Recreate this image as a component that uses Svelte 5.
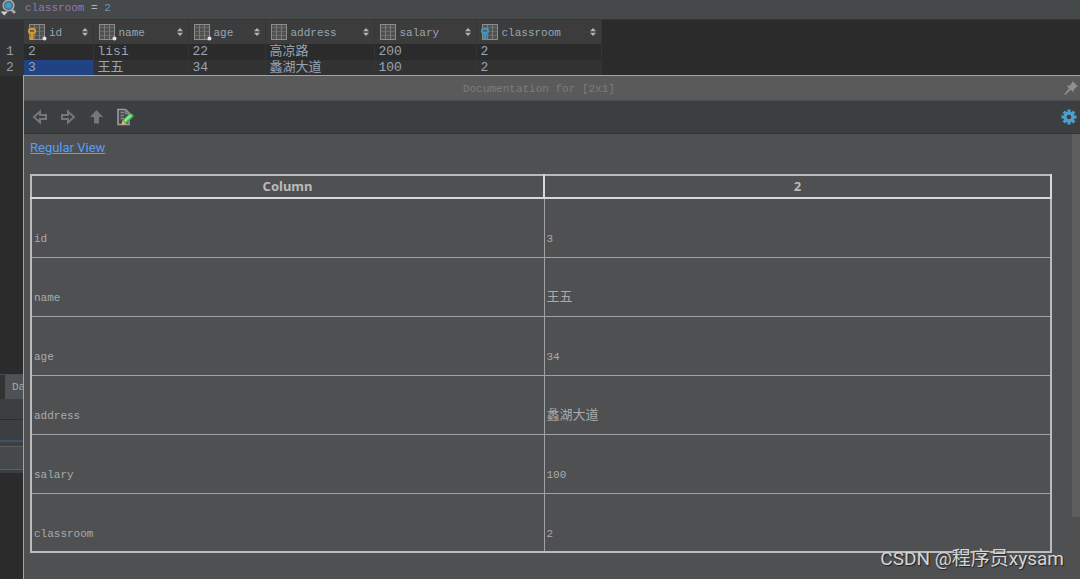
<script>
  const columns = [
    { name: 'id', width: 69, key: 'gold', dot: true },
    { name: 'name', width: 95, dot: true },
    { name: 'age', width: 77, dot: true },
    { name: 'address', width: 109 },
    { name: 'salary', width: 102 },
    { name: 'classroom', width: 125, key: 'blue' }
  ];
  const rows = [
    ['2', 'lisi', '22', '高凉路', '200', '2'],
    ['3', '王五', '34', '蠡湖大道', '100', '2']
  ];
  let selected = $state(1);
  const isHan = (text) => /[\u4e00-\u9fff]/.test(text);
</script>

<main class="app">
  <header class="filter">
    <svg class="lens" width="18" height="16" viewBox="0 0 18 16" aria-hidden="true">
      <circle cx="8.500" cy="5.500" r="5.300" fill="#4c6675" stroke="#a5a9ab" stroke-width="1.600" />
      <circle cx="8.500" cy="5.500" r="3.200" fill="#3d9bc8" />
      <path d="M11.500 9.500l3.500 3.500" stroke="#a5a9ab" stroke-width="2.600" />
      <path d="M0.500 11.500h7.500l-3.700 4z" fill="#d0d2d3" />
    </svg>
    <div class="query" role="textbox" aria-label="Filter criteria" tabindex="0" contenteditable="true"><span class="field">classroom</span> = <span class="num">2</span></div>
  </header>

  <section class="results">
    <table class="grid">
      <colgroup>
        <col style="width:24px" />
        {#each columns as c}<col style="width:{c.width}px" />{/each}
      </colgroup>
      <thead>
        <tr>
          <td class="corner"></td>
          {#each columns as c}
            <th scope="col">
              <button class="sort">
                <svg width="20" height="18" viewBox="0 0 20 18" aria-hidden="true">
                  <rect x="2.500" y="1.500" width="15" height="15" fill="#515151" stroke="#8d8d8d" />
                  <path d="M3 4.500h14M3 8.500h14M3 12.500h14" stroke="#686868" />
                  <path d="M7.500 2v14M12.500 2v14" stroke="#7c7c7c" />
                  {#if c.key}
                    <g fill="none" stroke={c.key === 'gold' ? '#d9982b' : '#3f94c4'}>
                      <rect x="2" y="6" width="6" height="4" rx="1.500" stroke-width="2" />
                      <path d="M5 10v7" stroke-width="3" />
                      {#if c.key === 'gold'}<path d="M3 15.500h2" stroke-width="2" />{/if}
                    </g>
                  {/if}
                  {#if c.dot}<circle cx="17.500" cy="15.500" r="2" fill="#e2e2e2" />{/if}
                </svg>
                <span class="label">{c.name}</span>
                <svg width="6" height="8" viewBox="0 0 6 8" aria-hidden="true">
                  <path d="M0 3.300L3 0l3 3.300zM0 4.700h6L3 8z" fill="#b4b4b4" />
                </svg>
              </button>
            </th>
          {/each}
        </tr>
      </thead>
      <tbody>
        {#each rows as row, r}
          <tr onclick={() => (selected = r)}>
            <th scope="row" class="gutter">{r + 1}</th>
            {#each row as cell, i}
              <td class:selected={i === 0 && selected === r}>{cell}</td>
            {/each}
          </tr>
        {/each}
      </tbody>
    </table>
  </section>

  <nav class="tabs"><button class="tab">Database Console</button></nav>
  <div class="tools"></div>
  <div class="panel"></div>
  <div class="status"></div>
  <div class="console"></div>

  <section class="popup" aria-label="Documentation">
    <div class="title">
      <span>Documentation for [2x1]</span>
      <button class="pin" aria-label="Pin">
        <svg width="14" height="14" viewBox="0 0 14 14" aria-hidden="true">
          <path d="M8.500 0L14 5.500l-1.600.6-2.600 2.600-.3 2.800-2.700-2.700L1 14l-.8-.8L5 7.200 2.700 4.800l3-.4L8.100 2z" fill="#8d8f90" />
        </svg>
      </button>
    </div>
    <div class="actions">
      <button aria-label="Back">
        <svg width="16" height="16" viewBox="0 0 16 16" aria-hidden="true">
          <path d="M2 8l6-5.500v3.500h6v4H8v3.500z" fill="none" stroke="#747677" stroke-width="2" />
        </svg>
      </button>
      <button aria-label="Forward">
        <svg width="16" height="16" viewBox="0 0 16 16" aria-hidden="true">
          <path d="M14 8L8 2.500V6H2v4h6v3.500z" fill="none" stroke="#747677" stroke-width="2" />
        </svg>
      </button>
      <button aria-label="View source">
        <svg width="16" height="16" viewBox="0 0 16 16" aria-hidden="true">
          <path d="M8.500 1L15 8h-4v6.500H6V8H2z" fill="#747677" />
        </svg>
      </button>
      <button aria-label="Edit source">
        <svg width="18" height="18" viewBox="0 0 18 18" aria-hidden="true">
          <path d="M2 1.500H9.500L13 5v11.500H2z" fill="#45484a" stroke="#9a9c9d" stroke-width="1.600" />
          <path d="M9.500 1v4.500h4M4.500 4.500H8M4.500 7.500H8M4.500 10.500H8" fill="none" stroke="#858788" stroke-width="1.600" />
          <path d="M5.500 17l1-5 4 4z" fill="#f2b368" />
          <path d="M6.500 12L13.500 5.500q2-1 3.500 1t0 2.800L10.500 16z" fill="#35a84a" />
          <path d="M7.500 12.200L14 6l2.200 2-6.700 6.300z" fill="#8be08e" />
        </svg>
      </button>
      <button class="gear" aria-label="Settings">
        <svg width="16" height="16" viewBox="-8 -8 16 16" aria-hidden="true">
          {#each [0, 45, 90, 135] as a}
            <rect x="-1.600" y="-7.500" width="3.200" height="15" fill="#4d9fcb" transform="rotate({a})" />
          {/each}
          <circle r="5.500" fill="#4d9fcb" />
          <circle r="2.300" fill="#3c3f41" />
        </svg>
      </button>
    </div>
    <div class="body">
      <article>
        <a href="#regular">Regular View</a>
        <table class="doc">
          <thead>
            <tr><th scope="col" class="key">Column</th><th scope="col">2</th></tr>
          </thead>
          <tbody>
            {#each columns as c, i}
              <tr>
                <td>{c.name}</td>
                <td class:han={isHan(rows[1][i])}>{rows[1][i]}</td>
              </tr>
            {/each}
          </tbody>
        </table>
      </article>
      <div class="track"><div class="thumb"></div></div>
    </div>
  </section>

  <div class="credit">CSDN @程序员xysam</div>
</main>

<style>
  :global(body) { margin: 0; background: #2b2b2b; }
  .app {
    position: relative;
    display: flex;
    flex-direction: column;
    height: 100vh;
    overflow: hidden;
    background: #2b2b2b;
    color: #a9b7c6;
    font: 11px/16px "Liberation Mono", "Noto Sans CJK SC", monospace;
  }
  button {
    display: flex;
    align-items: center;
    padding: 0;
    border: 0;
    background: none;
    color: inherit;
    font: inherit;
  }
  svg { display: block; flex: none; }

  .filter {
    display: flex;
    gap: 7px;
    height: 19px;
    background: #45494a;
    border-bottom: 1px solid #333536;
  }
  .query { outline: 0; white-space: pre; }
  .field { color: #9876aa; }
  .num { color: #6897bb; }

  .results { flex: 1; min-height: 0; color: #98a5b3; }
  .grid { border-collapse: collapse; table-layout: fixed; width: 601px; }
  .grid th, .grid td { padding: 0; font-weight: 400; text-align: left; box-sizing: border-box; }
  .grid thead { background: #3c3c3c; }
  .grid thead th { height: 24px; border-right: 1px solid #353535; }
  .corner { background: #313335; }
  .sort { width: 100%; padding-left: 3px; padding-right: 5px; box-sizing: border-box; }
  .label { flex: 1; text-align: left; padding-left: 2px; padding-top: 2px; }
  .grid tbody { font-size: 13px; }
  .grid tbody th, .grid tbody td { height: 16px; line-height: 16px; white-space: nowrap; }
  .grid tbody td { padding-left: 4px; border-right: 1px solid #353535; }
  .grid tbody tr:nth-child(2) { background: #323232; }
  .grid .gutter { background: #313335; padding-left: 6px; color: #999c9e; }
  .grid tbody .selected { background: #214283; }

  .tabs { display: flex; height: 24px; padding-left: 5px; background: #313335; border-top: 1px solid #494b4c; }
  .tab { padding-left: 7px; background: #4e5254; color: #a6a8a9; }
  .tools { height: 20px; background: #3c3f41; border-bottom: 1px solid #292b2c; }
  .panel { height: 20px; background: #3c3f41; border-bottom: 2px solid #43506b; }
  .status { height: 22px; margin-top: 4px; background: #45494a; border: solid #5c5f60; border-width: 1px 0; box-shadow: 0 -4px #3c3f41, 0 3px #3c3f41; }
  .console { height: 109px; }

  .popup {
    position: absolute;
    inset: 75px 0 0 23px;
    display: flex;
    flex-direction: column;
    border: solid #a3a3a3;
    border-width: 1px 0 0 1px;
    background: #4e5052;
  }
  .title {
    display: grid;
    grid-template-columns: 1fr 24px;
    align-items: center;
    height: 24px;
    padding-right: 2px;
    background: #5a5a5a;
    border-bottom: 1px solid #4a4c4d;
    color: #7b7d7e;
    text-align: center;
  }
  .title span { padding-top: 2px; }
  .pin { justify-self: end; }
  .actions {
    display: flex;
    align-items: center;
    gap: 12px;
    height: 32px;
    padding: 0 3px 0 8px;
    background: #3c3f41;
    border-bottom: 1px solid #323435;
  }
  .gear { margin-left: auto; }
  .body { flex: 1; display: flex; min-height: 0; }
  article { flex: 1; padding: 4px 20px 0 6px; }
  article a { display: block; width: max-content; color: #589df6; font: 13px/20px Roboto, sans-serif; }
  .doc {
    width: 100%;
    margin-top: 16px;
    border-collapse: collapse;
    table-layout: fixed;
    border: 2px solid #bbb;
    color: #a9abac;
  }
  .doc th {
    height: 21px;
    padding: 0;
    border-right: 2px solid #d8d8d8;
    border-bottom: 2px solid #d8d8d8;
    color: #bbb;
    font: 700 13px/21px "Noto Sans", sans-serif;
  }
  .doc .key { width: 50.1%; }
  .doc td {
    height: 59px;
    box-sizing: border-box;
    padding: 23px 2px 0;
    border: solid #a0a2a3;
    border-width: 0 1px 1px 0;
  }
  .doc .han { font-size: 13px; }
  .doc tbody td:last-child { border-right: 2px solid #bbb; }
  .doc tbody tr:last-child td { border-bottom: 2px solid #bbb; }
  .track { width: 8px; }
  .thumb { height: 86%; background: #5c5e60; }

  .credit {
    position: absolute;
    right: 16px;
    bottom: 8px;
    color: #d4d5d5;
    font: 19px/24px Roboto, "Noto Sans CJK SC", sans-serif;
    text-shadow: 1px 1px 1px #222;
  }
</style>
